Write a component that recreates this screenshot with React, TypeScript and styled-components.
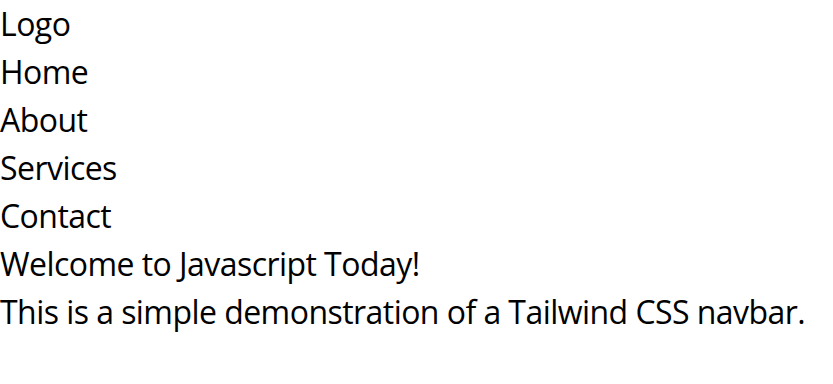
import React from "react";
import styled, { createGlobalStyle } from "styled-components";

const GlobalStyle = createGlobalStyle`
  body {
    margin: 0;
    background: #ffffff;
    color: #000000;
    font-family: "Open Sans", "Noto Sans", sans-serif;
  }
`;

const Nav = styled.nav`
  display: flex;
  flex-direction: column;
`;

const Line = styled.div`
  font-size: 32px;
  line-height: 48px;
  letter-spacing: -0.55px;
  white-space: nowrap;
`;

const Main = styled.main`
  display: flex;
  flex-direction: column;
`;

const links = ["Home", "About", "Services", "Contact"];

export default function App() {
  return (
    <>
      <GlobalStyle />
      <Nav>
        <Line>Logo</Line>
        {links.map((l) => (
          <Line key={l}>{l}</Line>
        ))}
      </Nav>
      <Main>
        <Line>Welcome to Javascript Today!</Line>
        <Line>This is a simple demonstration of a Tailwind CSS navbar.</Line>
      </Main>
    </>
  );
}
